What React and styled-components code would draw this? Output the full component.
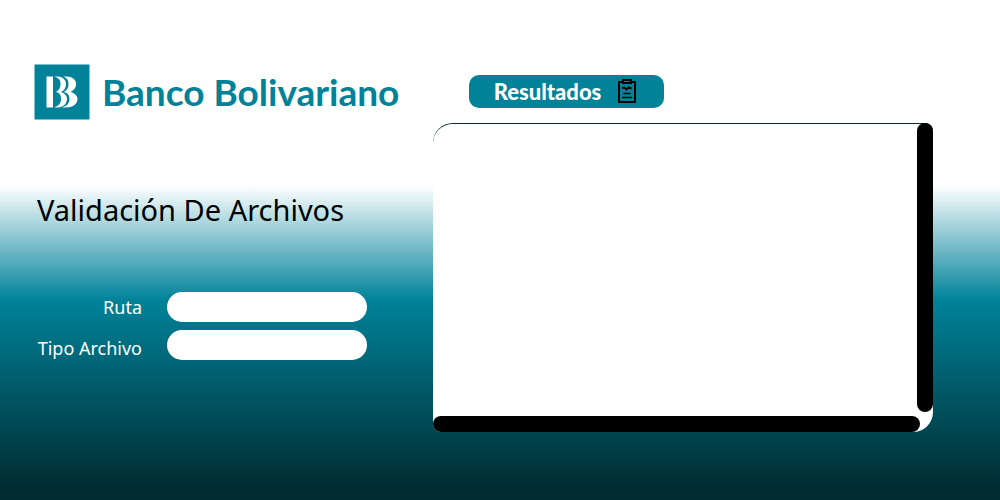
import React from "react";
import styled, { createGlobalStyle } from "styled-components";

const GlobalStyle = createGlobalStyle`
  *, *::before, *::after { box-sizing: border-box; }
  body {
    margin: 0;
    font-family: "Noto Sans", "Open Sans", sans-serif;
  }
`;

const Page = styled.main`
  display: flex;
  gap: 33px;
  min-height: 100vh;
  background: linear-gradient(180deg, #fff 37%, #008299 60%, #002b30 98%);
`;

const FormSide = styled.section`
  flex: 0 0 auto;
  width: 40%;
  min-width: 400px;
  padding: 64px 0 32px 34px;
`;

const ResultSide = styled.section`
  flex: 1;
  min-width: 0;
  padding: 75px 67px 32px 0;
`;

const Brand = styled.div`
  display: flex;
  align-items: center;
  gap: 12px;
  color: #008299;
`;

const BrandMark = styled.svg`
  flex: none;
  width: 56px;
  height: 56px;
`;

const BrandName = styled.span`
  font-family: Lato, "Noto Sans", sans-serif;
  font-size: 37px;
  font-weight: 700;
  line-height: 56px;
  white-space: nowrap;
`;

const Title = styled.h1`
  margin: 70px 0 0 3px;
  font-size: 29px;
  font-weight: 400;
  line-height: 40px;
  color: #000;
  white-space: nowrap;
`;

const Form = styled.form`
  display: flex;
  justify-content: flex-end;
  gap: 25px;
  margin-top: 62px;
  padding-right: 33px;
`;

const Labels = styled.div`
  display: flex;
  flex-direction: column;
  gap: 11px;
  text-align: right;
`;

const Label = styled.label`
  font-size: 18px;
  line-height: 30px;
  color: #fff;
  white-space: nowrap;
`;

const Fields = styled.div`
  display: flex;
  flex-direction: column;
  gap: 8px;
`;

const Field = styled.input`
  width: 200px;
  height: 30px;
  padding: 0 12px;
  border: 0;
  border-radius: 15px;
  background: #fff;
  font: inherit;
`;

const ResultButton = styled.button`
  display: flex;
  align-items: center;
  justify-content: center;
  gap: 14px;
  width: 195px;
  height: 33px;
  margin-left: 36px;
  padding: 0;
  border: 0;
  border-radius: 10px;
  background: #008299;
  color: #fff;
  font: 900 22px/32px Lato, "Noto Sans", sans-serif;
`;

const ClipboardIcon = styled.svg`
  flex: none;
  width: 24px;
  height: 26px;
`;

const ResultPanel = styled.div`
  display: grid;
  grid-template-columns: 1fr 16px;
  grid-template-rows: 1fr 16px;
  height: 309px;
  margin-top: 15px;
  border-top: 1px solid #002b30;
  border-radius: 20px 8px 20px 8px;
  background: #fff;
`;

const ResultText = styled.textarea`
  min-width: 0;
  padding: 12px;
  border: 0;
  background: transparent;
  font: inherit;
  resize: none;
`;

const VerticalBar = styled.div`
  margin: -1px 0 4px;
  border-radius: 8px;
  background: #000;
`;

const HorizontalBar = styled.div`
  margin-right: -3px;
  border-radius: 8px;
  background: #000;
`;

export default function App() {
  return (
    <>
      <GlobalStyle />
      <Page>
        <FormSide>
          <Brand>
            <BrandMark viewBox="0 0 56 56" aria-hidden="true">
              <rect x="0.5" y="0.5" width="55" height="55" fill="#008299" />
              <g fill="#fff">
                <path d="M12.500 12.500H19V43.500H12.500Z" />
                <path d="M20 12.500H24C29 13 32 16 32 20C32 24 30 26.500 27 28C31 29.500 33 32 33 35C33 40 29 43 24 43.500H20C25 42 27 39 27 35C27 31 26 29 22 28C25 26 26.500 24 26.500 20C26.500 16 25 14 20 12.500Z" />
                <path d="M29 12.500H33C39 13 42 16 42 20C42 24 40 26 36.500 28C41 29.500 43.500 32 43.500 35C43.500 40 39 43 33 43.500H28C33 42 35.500 39 35.500 35C35.500 31 33.500 29 30 28C33 26 34.500 24 34.500 20C34.500 16 33 14 29 12.500Z" />
              </g>
            </BrandMark>
            <BrandName>Banco Bolivariano</BrandName>
          </Brand>
          <Title>Validación De Archivos</Title>
          <Form>
            <Labels>
              <Label htmlFor="ruta">Ruta</Label>
              <Label htmlFor="tipo">Tipo Archivo</Label>
            </Labels>
            <Fields>
              <Field id="ruta" type="text" />
              <Field id="tipo" type="text" />
            </Fields>
          </Form>
        </FormSide>
        <ResultSide>
          <ResultButton type="button">
            Resultados
            <ClipboardIcon viewBox="0 0 24 26" fill="none" stroke="#000" strokeWidth="2" aria-hidden="true">
              <path d="M8 3H4V23H20V3H16" />
              <path d="M8 1H16V4H8Z" />
              <path d="M7 9L9 8.500L11.500 10.500L13.500 8.500L16.500 9.500" strokeWidth="2" />
              <path d="M9 14.500H15M7.500 18.500H16.500" strokeWidth="1.500" strokeLinecap="round" />
            </ClipboardIcon>
          </ResultButton>
          <ResultPanel>
            <ResultText aria-label="Resultados" />
            <VerticalBar />
            <HorizontalBar />
          </ResultPanel>
        </ResultSide>
      </Page>
    </>
  );
}
